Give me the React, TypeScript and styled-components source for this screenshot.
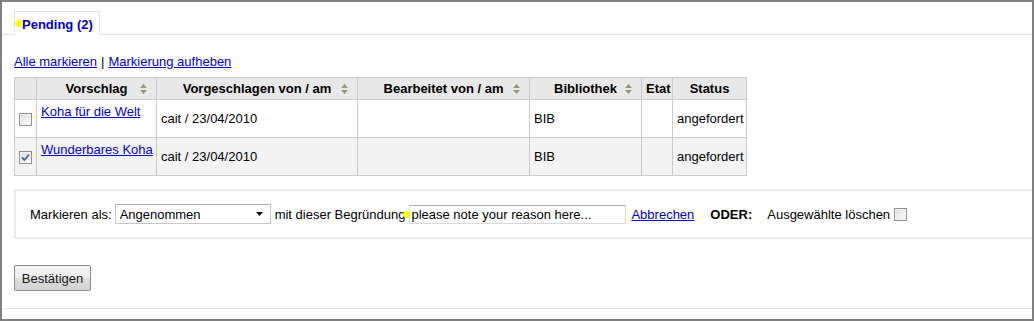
import React from "react";
import styled, { createGlobalStyle } from "styled-components";

const GlobalStyle = createGlobalStyle`
  html, body { margin: 0; padding: 0; background: #fff; }
  body {
    font-family: "Liberation Sans", Arial, sans-serif;
    font-size: 13px;
    line-height: 15px;
    color: #000;
  }
`;

const Frame = styled.div`
  width: 1034px;
  height: 321px;
  box-sizing: border-box;
  border: 2px solid #808080;
  background: #fff;
  overflow: hidden;
  display: flex;
  flex-direction: column;
`;

const TabBar = styled.div`
  display: flex;
  padding: 9px 0 0 12px;
  border-bottom: 1px solid #e3e3e3;
`;

const Tab = styled.div`
  display: flex;
  align-items: flex-start;
  border: 1px solid #e3e3e3;
  border-bottom-color: #fff;
  margin-bottom: -1px;
  padding: 5px 6px 2px 0;
  background: #fff;
  font-weight: bold;
  color: #0000cc;
`;

const Dot = styled.span`
  display: block;
  width: 7px;
  height: 7px;
  border-radius: 50%;
  background: #ffff00;
  flex: none;
`;

const TabDot = styled(Dot)`
  margin-top: 3px;
`;

const Content = styled.div`
  display: flex;
  flex-direction: column;
  align-items: flex-start;
  padding-left: 12px;
`;

const LinkLine = styled.div`
  margin-top: 19px;
  display: flex;
  gap: 4px;
`;

const Link = styled.a`
  color: #0000cc;
  text-decoration: underline;
  cursor: pointer;
`;

const Table = styled.table`
  margin-top: 8px;
  border-collapse: collapse;
  table-layout: fixed;
  width: 733px;
  border: 1px solid #cbcbcb;
`;

const Th = styled.th`
  position: relative;
  height: 21px;
  padding: 0 4px;
  background: #e8e8e8;
  border: 1px solid #cbcbcb;
  font-weight: bold;
  text-align: center;
  vertical-align: middle;
  white-space: nowrap;
`;

const SortIcon = styled.svg`
  position: absolute;
  right: 9px;
  top: 50%;
  margin-top: -5px;
`;

const Tr = styled.tr<{ $alt?: boolean }>`
  height: 38px;
  background: ${(p) => (p.$alt ? "#f3f3f3" : "#fff")};
`;

const Td = styled.td<{ $top?: boolean; $center?: boolean }>`
  padding: ${(p) => (p.$top ? "4px 4px 0" : "0 4px")};
  border: 1px solid #cbcbcb;
  vertical-align: ${(p) => (p.$top ? "top" : "middle")};
  text-align: ${(p) => (p.$center ? "center" : "left")};
  white-space: nowrap;
`;

const Check = styled.span`
  display: inline-flex;
  align-items: center;
  justify-content: center;
  box-sizing: border-box;
  width: 13px;
  height: 13px;
  border: 1px solid #8f8f8f;
  background: linear-gradient(135deg, #dcdcdc 0%, #f4f4f4 70%, #ffffff 100%);
  box-shadow: inset 0 0 0 1px #f4f4f4;
  vertical-align: middle;
  flex: none;
`;

const Fieldset = styled.div`
  align-self: stretch;
  margin-top: 13px;
  border: 2px solid #ebebeb;
  border-right: none;
  padding: 13px 0 13px 14px;
  display: flex;
  align-items: center;
  height: 20px;
`;

const Label = styled.span<{ $gap?: number; $bold?: boolean }>`
  margin-left: ${(p) => p.$gap ?? 0}px;
  font-weight: ${(p) => (p.$bold ? "bold" : "normal")};
  white-space: nowrap;
`;

const SelectWrap = styled.div`
  position: relative;
  margin-left: 3px;
  width: 156px;
  height: 20px;
  flex: none;
`;

const Select = styled.select`
  appearance: none;
  -webkit-appearance: none;
  width: 100%;
  height: 100%;
  box-sizing: border-box;
  margin: 0;
  border: 1px solid #c3c6cc;
  border-top-color: #abadb3;
  border-radius: 0;
  background: #fff;
  padding: 0 0 0 4px;
  font-family: "Liberation Sans", Arial, sans-serif;
  font-size: 13px;
  color: #000;
  outline: none;
`;

const SelectArrow = styled.svg`
  position: absolute;
  right: 8px;
  top: 8px;
  pointer-events: none;
`;

const InputWrap = styled.div`
  position: relative;
  margin-left: 4px;
  flex: none;
`;

const InputDot = styled(Dot)`
  position: absolute;
  left: -6px;
  top: 6px;
`;

const TextInput = styled.input`
  display: block;
  width: 217px;
  height: 19px;
  box-sizing: border-box;
  margin: 0;
  border: 1px solid #d5d9e0;
  border-top-color: #abadb3;
  padding: 0 1px;
  font-family: "Liberation Sans", Arial, sans-serif;
  font-size: 13px;
  color: #000;
  background: #fff;
  outline: none;
`;

const GapLink = styled(Link)<{ $gap?: number }>`
  margin-left: ${(p) => p.$gap ?? 0}px;
`;

const BoxCheck = styled(Check)`
  margin-left: 4px;
  align-self: flex-start;
  margin-top: 4px;
`;

const Button = styled.button`
  margin-top: 26px;
  width: 77px;
  height: 26px;
  box-sizing: border-box;
  border: 1px solid #8a8a8a;
  border-radius: 2px;
  background: linear-gradient(to bottom, #f6f6f6 0%, #ececec 48%, #dedede 52%, #d2d2d2 100%);
  font-family: "Liberation Sans", Arial, sans-serif;
  font-size: 13px;
  color: #1a1a1a;
  padding: 0;
  cursor: pointer;
`;

const Divider = styled.div`
  margin-top: 17px;
  border-top: 1px solid #e3e3e3;
`;

function Sort() {
  return (
    <SortIcon width="7" height="10" viewBox="0 0 7 10">
      <polygon points="0,4 3.5,0 7,4" fill="#9a9a72" />
      <polygon points="0,6 7,6 3.5,10" fill="#9a9a72" />
    </SortIcon>
  );
}

function Tick() {
  return (
    <svg width="9" height="9" viewBox="0 0 9 9">
      <path d="M1 4.5 L3.5 7 L8 1.5" stroke="#4b5f95" strokeWidth="1.8" fill="none" />
    </svg>
  );
}

const rows = [
  { title: "Koha für die Welt", checked: false },
  { title: "Wunderbares Koha", checked: true },
];

export default function App() {
  return (
    <>
      <GlobalStyle />
      <Frame>
        <TabBar>
          <Tab>
            <TabDot />
            <span>Pending (2)</span>
          </Tab>
        </TabBar>
        <Content>
          <LinkLine>
            <Link>Alle markieren</Link>
            <span>|</span>
            <Link>Markierung aufheben</Link>
          </LinkLine>
          <Table>
            <colgroup>
              <col style={{ width: 22 }} />
              <col style={{ width: 120 }} />
              <col style={{ width: 201 }} />
              <col style={{ width: 172 }} />
              <col style={{ width: 112 }} />
              <col style={{ width: 31 }} />
              <col style={{ width: 74 }} />
            </colgroup>
            <thead>
              <tr>
                <Th />
                <Th>
                  Vorschlag
                  <Sort />
                </Th>
                <Th>
                  Vorgeschlagen von / am
                  <Sort />
                </Th>
                <Th>
                  Bearbeitet von / am
                  <Sort />
                </Th>
                <Th>
                  Bibliothek
                  <Sort />
                </Th>
                <Th>Etat</Th>
                <Th>Status</Th>
              </tr>
            </thead>
            <tbody>
              {rows.map((r, i) => (
                <Tr key={r.title} $alt={i % 2 === 1}>
                  <Td $center>
                    <Check>{r.checked ? <Tick /> : null}</Check>
                  </Td>
                  <Td $top>
                    <Link>{r.title}</Link>
                  </Td>
                  <Td>cait / 23/04/2010</Td>
                  <Td />
                  <Td>BIB</Td>
                  <Td />
                  <Td>angefordert</Td>
                </Tr>
              ))}
            </tbody>
          </Table>
          <Fieldset>
            <Label>Markieren als:</Label>
            <SelectWrap>
              <Select defaultValue="Angenommen">
                <option>Angenommen</option>
                <option>Abgelehnt</option>
              </Select>
              <SelectArrow width="7" height="4" viewBox="0 0 7 4">
                <polygon points="0,0 7,0 3.5,4" fill="#000" />
              </SelectArrow>
            </SelectWrap>
            <Label $gap={4}>mit dieser Begründung</Label>
            <InputWrap>
              <TextInput defaultValue="please note your reason here..." />
              <InputDot />
            </InputWrap>
            <GapLink $gap={5}>Abbrechen</GapLink>
            <Label $gap={16} $bold>
              ODER:
            </Label>
            <Label $gap={15}>Ausgewählte löschen</Label>
            <BoxCheck />
          </Fieldset>
          <Button>Bestätigen</Button>
        </Content>
        <Divider />
      </Frame>
    </>
  );
}
